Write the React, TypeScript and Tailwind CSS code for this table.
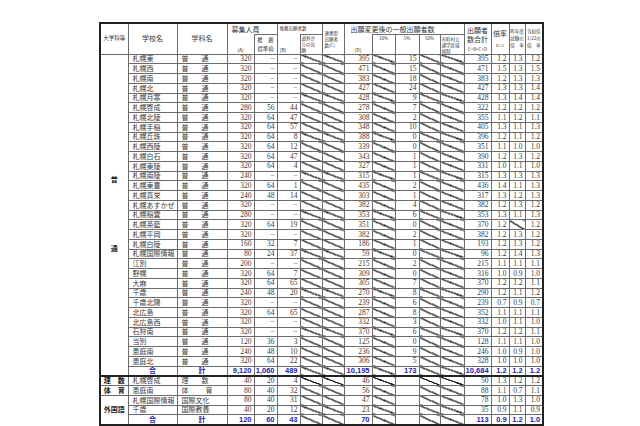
import React from "react";

type Row = {
  school: string;
  dept: [string, string];
  a: string;
  rec: string;
  b: string;
  d: string;
  five: string | null;
  e: string;
  r1: string;
  r2: string | null;
  r3: string;
};

const mk = (
  school: string,
  a: string,
  rec: string,
  b: string,
  d: string,
  five: string,
  e: string,
  r1: string,
  r2: string | null,
  r3: string
): Row => ({ school, dept: ["普", "通"], a, rec, b, d, five, e, r1, r2, r3 });

const futsu: Row[] = [
  mk("札幌東", "320", "−", "−", "395", "15", "395", "1.2", "1.3", "1.2"),
  mk("札幌西", "320", "−", "−", "471", "15", "471", "1.5", "1.3", "1.5"),
  mk("札幌南", "320", "−", "−", "383", "18", "383", "1.2", "1.3", "1.3"),
  mk("札幌北", "320", "−", "−", "427", "24", "427", "1.3", "1.3", "1.4"),
  mk("札幌月寒", "320", "−", "−", "428", "9", "428", "1.3", "1.4", "1.4"),
  mk("札幌啓成", "280", "56", "44", "278", "7", "322", "1.2", "1.2", "1.2"),
  mk("札幌北陵", "320", "64", "47", "308", "2", "355", "1.1", "1.2", "1.1"),
  mk("札幌手稲", "320", "64", "57", "348", "10", "405", "1.3", "1.1", "1.3"),
  mk("札幌丘珠", "320", "64", "8", "388", "0", "396", "1.2", "1.1", "1.2"),
  mk("札幌西陵", "320", "64", "12", "339", "0", "351", "1.1", "1.0", "1.0"),
  mk("札幌白石", "320", "64", "47", "343", "1", "390", "1.2", "1.3", "1.2"),
  mk("札幌東陵", "320", "64", "4", "327", "1", "331", "1.0", "1.1", "1.0"),
  mk("札幌南陵", "240", "−", "−", "315", "1", "315", "1.3", "1.3", "1.3"),
  mk("札幌東豊", "320", "64", "1", "435", "2", "436", "1.4", "1.1", "1.3"),
  mk("札幌真栄", "240", "48", "14", "303", "1", "317", "1.3", "1.2", "1.3"),
  mk("札幌あすかぜ", "320", "−", "−", "382", "4", "382", "1.2", "1.3", "1.2"),
  mk("札幌稲雲", "280", "−", "−", "353", "6", "353", "1.3", "1.1", "1.3"),
  mk("札幌英藍", "320", "64", "19", "351", "0", "370", "1.2", null, "1.2"),
  mk("札幌平岡", "320", "−", "−", "382", "2", "382", "1.2", "1.3", "1.2"),
  mk("札幌白陵", "160", "32", "7", "186", "1", "193", "1.2", "1.3", "1.2"),
  mk("札幌国際情報", "80", "24", "37", "59", "0", "96", "1.2", "1.4", "1.3"),
  mk("江別", "200", "−", "−", "215", "2", "215", "1.1", "1.1", "1.1"),
  mk("野幌", "320", "64", "7", "309", "0", "316", "1.0", "0.9", "1.0"),
  mk("大麻", "320", "64", "65", "305", "7", "370", "1.2", "1.2", "1.1"),
  mk("千歳", "240", "48", "20", "270", "8", "290", "1.2", "1.1", "1.2"),
  mk("千歳北陽", "320", "−", "−", "239", "6", "239", "0.7", "0.9", "0.7"),
  mk("北広島", "320", "64", "65", "287", "8", "352", "1.1", "1.1", "1.1"),
  mk("北広島西", "320", "−", "−", "332", "3", "332", "1.0", "1.1", "1.0"),
  mk("石狩南", "320", "−", "−", "370", "6", "370", "1.2", "1.2", "1.1"),
  mk("当別", "120", "36", "3", "125", "0", "128", "1.1", "1.1", "1.0"),
  mk("恵庭南", "240", "48", "10", "236", "9", "246", "1.0", "0.9", "1.0"),
  mk("恵庭北", "320", "64", "22", "306", "5", "328", "1.0", "1.0", "1.0"),
];

const senmon: (Row & { group?: string; span?: number })[] = [
  { school: "札幌啓成", dept: ["理", "数"], a: "40", rec: "20", b: "4", d: "46", five: null, e: "50", r1: "1.3", r2: "1.2", r3: "1.2", group: "理　数", span: 1 },
  { school: "恵庭南", dept: ["体", "育"], a: "80", rec: "40", b: "32", d: "56", five: null, e: "88", r1: "1.1", r2: "0.7", r3: "1.1", group: "体　育", span: 1 },
  { school: "札幌国際情報", dept: ["国際文化", ""], a: "80", rec: "40", b: "31", d: "47", five: null, e: "78", r1: "1.0", r2: "1.3", r3: "1.0", group: "外国語", span: 3 },
  { school: "千歳", dept: ["国際教養", ""], a: "40", rec: "20", b: "12", d: "23", five: null, e: "35", r1: "0.9", r2: "1.1", r3: "0.9" },
];

// every cell sets its own small font size so the 16px default strut never stretches a row
const line = "border border-[#6b6b6b] p-0 leading-none overflow-hidden text-[4.5px]";
const diag =
  "bg-[linear-gradient(to_top_right,transparent_calc(50%_-_0.75px),#1f1f1f_calc(50%_-_0.75px),#1f1f1f_calc(50%_+_0.6px),transparent_calc(50%_+_0.6px))]";
const num = `${line} text-right pr-[2px] font-['Liberation_Serif',serif] text-[7.5px] text-[#3a3a3a]`;
const tot = `${line} text-right pr-[2px] font-['Liberation_Sans',sans-serif] font-bold text-[7.5px] text-[#1c1cb0]`;
const jp = `${line} text-left pl-[4px] text-[7px] text-[#3a3a3a] whitespace-nowrap`;
const tiny = "text-[4.5px] leading-[5px] text-[#333] whitespace-nowrap";
const th = `${line} font-normal text-[#333]`;

function Diag() {
  return <td className={`${line} ${diag}`} />;
}

function Dept({ d }: { d: [string, string] }) {
  if (!d[1]) return <td className={jp}>{d[0]}</td>;
  return (
    <td className={jp}>
      <div className={`flex ${d[0] === "体" ? "gap-[17px]" : "gap-[13px]"}`}>
        <span>{d[0]}</span>
        <span>{d[1]}</span>
      </div>
    </td>
  );
}

function Body({ r }: { r: Row }) {
  return (
    <>
      <td className={jp}>{r.school}</td>
      <Dept d={r.dept} />
      <td className={num}>{r.a}</td>
      <td className={num}>{r.rec}</td>
      <td className={num}>{r.b}</td>
      <Diag />
      <Diag />
      <td className={num}>{r.d}</td>
      <Diag />
      {r.five === null ? <td className={line} /> : <td className={num}>{r.five}</td>}
      <Diag />
      <Diag />
      <td className={num}>{r.e}</td>
      <td className={num}>{r.r1}</td>
      {r.r2 === null ? <Diag /> : <td className={num}>{r.r2}</td>}
      <td className={num}>{r.r3}</td>
    </>
  );
}

function Total({
  a,
  rec,
  b,
  d,
  five,
  e,
  r,
}: {
  a: string;
  rec: string;
  b: string;
  d: string;
  five: string | null;
  e: string;
  r: [string, string, string];
}) {
  return (
    <>
      <td className={`${line} text-center text-[7px] font-bold text-[#1c1cb0]`}>合</td>
      <td className={`${line} text-center text-[7px] font-bold text-[#1c1cb0]`}>計</td>
      <td className={tot}>{a}</td>
      <td className={tot}>{rec}</td>
      <td className={tot}>{b}</td>
      <Diag />
      <Diag />
      <td className={tot}>{d}</td>
      <Diag />
      {five === null ? <td className={line} /> : <td className={tot}>{five}</td>}
      <Diag />
      <Diag />
      <td className={tot}>{e}</td>
      <td className={tot}>{r[0]}</td>
      <td className={tot}>{r[1]}</td>
      <td className={tot}>{r[2]}</td>
    </>
  );
}

const widths = [28, 49, 50, 27, 23, 23, 22, 22, 28, 23, 24, 21, 24, 27, 18, 16, 18];

export default function App() {
  return (
    <div className="w-[640px] h-[426px] bg-white overflow-hidden pt-[22px] pl-[99px] font-['Noto_Sans_CJK_JP',sans-serif]">
      <table className="table-fixed border-collapse w-[443px] border-2 border-[#222]">
        <colgroup>
          {widths.map((w, i) => (
            <col key={i} style={{ width: w }} />
          ))}
        </colgroup>
        <thead>
          <tr className="h-[11px]">
            <th rowSpan={2} className={`${th} text-[5.5px] whitespace-nowrap`}>大学科等</th>
            <th rowSpan={2} className={`${th} text-[7px]`}>学校名</th>
            <th rowSpan={2} className={`${th} text-[7px]`}>学科名</th>
            <th colSpan={2} className={`${th} border-b-0 text-[7px] text-left pl-[4px] align-top pt-[2px] whitespace-nowrap`}>
              募集人員
            </th>
            <th colSpan={2} className={`${th} border-b-0 text-left pl-[2px] align-top pt-[2px]`}>
              <div className={tiny}>推薦出願者数</div>
            </th>
            <th rowSpan={2} className={`${th} text-left pl-[2px]`}>
              <div className={`${tiny} leading-[6px]`}>連携型<br />出願者<br />数(C)</div>
            </th>
            <th colSpan={5} className={`${th} border-b-0 text-[7px] text-left pl-[6px] align-top pt-[2px] whitespace-nowrap`}>
              出願変更後の一般出願者数
            </th>
            <th rowSpan={2} className={th}>
              <div className="text-[7px] leading-[9px] whitespace-nowrap">出願者<br />数合計</div>
              <div className="text-[4.5px] leading-[6px] mt-[2px] whitespace-nowrap">E=B+C+D</div>
            </th>
            <th rowSpan={2} className={th}>
              <div className="text-[7px] leading-[8px]">倍率</div>
              <div className="text-[5px] leading-[6px] mt-[6px] font-['Liberation_Serif',serif]">E/A</div>
            </th>
            <th rowSpan={2} className={th}>
              <div className={`${tiny} leading-[7px]`}>昨年度<br />試験の<br />倍　率</div>
            </th>
            <th rowSpan={2} className={th}>
              <div className={`${tiny} leading-[7px]`}>当初倍<br />1/22の<br />倍　率</div>
            </th>
          </tr>
          <tr className="h-[19px]">
            <th className={`${th} border-t-0 align-bottom pb-[2px] text-[5px]`}>(A)</th>
            <th className={`${th} whitespace-nowrap`}>
              <div className="text-[5.5px] leading-[6px]">推　薦</div>
              <div className="text-[5.5px] leading-[6px] mt-[3px]">標準枠</div>
            </th>
            <th className={`${th} border-t-0 align-bottom pb-[2px] text-left pl-[2px] text-[5px]`}>(B)</th>
            <th className={`${th} text-left pl-[1px] align-top`}>
              <div className={`${tiny} leading-[6px]`}>道外か<br />らの出<br />願</div>
            </th>
            <th className={`${th} border-t-0 align-bottom pb-[2px] text-center text-[5px]`}>(D)</th>
            <th className={`${th} align-top pt-[1px]`}><div className={tiny}>10%</div></th>
            <th className={`${th} align-top pt-[1px]`}><div className={tiny}>5%</div></th>
            <th className={`${th} align-top pt-[1px]`}><div className={tiny}>50%</div></th>
            <th className={`${th} align-top pt-[1px] text-left pl-[1px]`}>
              <div className={`${tiny} leading-[6px]`}>市町村立<br />通学区域<br />規制</div>
            </th>
          </tr>
        </thead>
        <tbody>
          {futsu.map((r, i) => (
            <tr key={r.school} className="h-[9.76px]">
              {i === 0 && (
                <td rowSpan={33} className={`${line} align-top text-center font-bold text-[7px] text-[#222]`}>
                  <div className="flex flex-col items-center gap-[62px] pt-[121px]">
                    <span>普</span>
                    <span>通</span>
                  </div>
                </td>
              )}
              <Body r={r} />
            </tr>
          ))}
          <tr className="h-[9.76px]">
            <Total a="9,120" rec="1,060" b="489" d="10,195" five="173" e="10,684" r={["1.2", "1.2", "1.2"]} />
          </tr>
          {senmon.map((r, i) => (
            <tr key={r.school + i} className={`h-[9.76px] ${i === 0 ? "border-t-2 border-[#222]" : ""}`}>
              {r.group && (
                <td rowSpan={r.span} className={`${line} text-center font-bold text-[7px] text-[#222] whitespace-nowrap`}>
                  {r.group}
                </td>
              )}
              <Body r={r} />
            </tr>
          ))}
          <tr className="h-[9.76px]">
            <Total a="120" rec="60" b="43" d="70" five={null} e="113" r={["0.9", "1.2", "1.0"]} />
          </tr>
        </tbody>
      </table>
    </div>
  );
}
